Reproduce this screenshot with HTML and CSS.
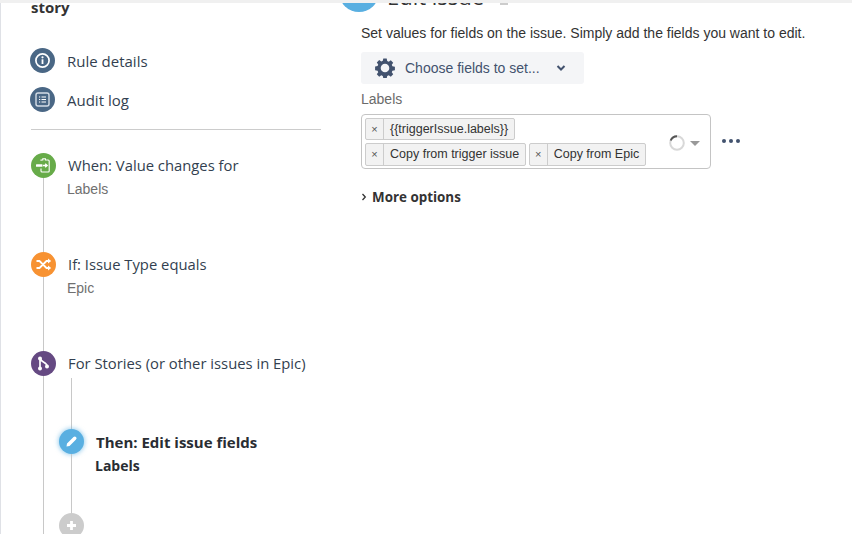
FILE: index.html
```html
<!DOCTYPE html>
<html lang="en">
<head>
<meta charset="utf-8">
<title>Edit issue rule</title>
<link rel="stylesheet" href="styles.css">
</head>
<body>
<div class="topstrip"></div>
<div class="page">
  <aside class="sidebar">
    <h1 class="rule-title">story</h1>
    <nav class="links">
      <a class="link">
        <span class="icon navy">
          <svg viewBox="0 0 25 25" width="25" height="25"><circle cx="12.5" cy="12.5" r="6.6" fill="none" stroke="#fff" stroke-width="1.7"/><rect x="11.6" y="11.3" width="1.8" height="4.7" fill="#fff"/><circle cx="12.5" cy="9.3" r="1.1" fill="#fff"/></svg>
        </span>
        <span>Rule details</span>
      </a>
      <a class="link">
        <span class="icon navy">
          <svg viewBox="0 0 25 25" width="25" height="25"><rect x="6" y="6" width="13" height="13" rx="2" fill="none" stroke="#d5dde6" stroke-width="1.4"/><path d="M9 10h1.2M11.5 10H16M9 12.5h1.2M11.5 12.5H16M9 15h1.2M11.5 15H16" stroke="#fff" stroke-width="1.2" fill="none"/></svg>
        </span>
        <span>Audit log</span>
      </a>
    </nav>
    <hr class="divider">
    <div class="timeline">
      <div class="step tall">
        <div class="rail">
          <span class="icon green">
            <svg viewBox="0 0 25 25" width="25" height="25"><path d="M10 7.800V7h1.800V5.800h2.600V7h2.800a1 1 0 0 1 1 1v10a1 1 0 0 1-1 1H11a1 1 0 0 1-1-1v-2.500" fill="none" stroke="#fff" stroke-width="1.100"/><rect x="5" y="11.300" width="6.500" height="2.400" rx=".5" fill="#fff"/><path d="M12 12.500h3.800M14.200 10.700l2 1.800-2 1.800" fill="none" stroke="#fff" stroke-width="1.300"/></svg>
          </span>
          <span class="line"></span>
        </div>
        <div class="step-body">
          <div class="step-title">When: Value changes for</div>
          <div class="step-sub">Labels</div>
        </div>
      </div>
      <div class="step tall">
        <div class="rail">
          <span class="icon orange">
            <svg viewBox="0 0 25 25" width="25" height="25"><path d="M5.500 9h3l7 7h2.500M5.500 16h3l7-7h2.500" fill="none" stroke="#fff" stroke-width="1.800"/><path d="M17 6.500l3.200 2.500-3.200 2.500zM17 13.500l3.200 2.500-3.200 2.500z" fill="#fff"/></svg>
          </span>
          <span class="line"></span>
        </div>
        <div class="step-body">
          <div class="step-title">If: Issue Type equals</div>
          <div class="step-sub">Epic</div>
        </div>
      </div>
      <div class="step">
        <div class="rail">
          <span class="icon purple">
            <svg viewBox="0 0 25 25" width="25" height="25"><path d="M9 7.500v10M9.500 8c1 3.500 6.500 3 6.500 7" fill="none" stroke="#fff" stroke-width="1.700"/><circle cx="9" cy="7.500" r="2" fill="#fff"/><circle cx="9" cy="17.500" r="2" fill="#fff"/><circle cx="16" cy="15.500" r="2" fill="#fff"/></svg>
          </span>
          <span class="line"></span>
        </div>
        <div class="step-body">
          <div class="step-title">For Stories (or other issues in Epic)</div>
          <div class="nested">
            <span class="stub"></span>
            <div class="step nested-step">
              <div class="rail">
                <span class="icon blue glow">
                  <svg viewBox="0 0 25 25" width="25" height="25"><path d="M8 14.500l6.500-6.500a1.500 1.500 0 0 1 2.500 2.500L10.500 17 7.500 17.500z" fill="#fff"/></svg>
                </span>
                <span class="line"></span>
              </div>
              <div class="step-body">
                <div class="step-title strong">Then: Edit issue fields</div>
                <div class="step-sub strong-sub">Labels</div>
              </div>
            </div>
            <div class="step">
              <div class="rail">
                <span class="icon grey">
                  <svg viewBox="0 0 25 25" width="25" height="25"><path d="M12.500 8v9M8 12.500h9" fill="none" stroke="#fff" stroke-width="2.800"/></svg>
                </span>
              </div>
            </div>
          </div>
        </div>
      </div>
    </div>
  </aside>
  <main class="main">
    <header class="main-head">
      <span class="head-icon"></span>
      <h2 class="head-title">Edit issue</h2>
      <span class="head-mark"></span>
    </header>
    <p class="desc">Set values for fields on the issue. Simply add the fields you want to edit.</p>
    <button class="choose">
      <svg class="gear" viewBox="0 0 20 20" width="20" height="20"><path d="M8.300 0.800h3.400l.5 2.500 1.500.6 2.100-1.400 2.400 2.400-1.400 2.100.6 1.500 2.500.5v3.400l-2.500.5-.6 1.500 1.400 2.100-2.400 2.400-2.100-1.400-1.500.6-.5 2.500H8.300l-.5-2.500-1.500-.6-2.100 1.400-2.400-2.400 1.400-2.100-.6-1.500-2.500-.5V8.700l2.500-.5.6-1.500-1.400-2.100 2.400-2.400 2.100 1.400 1.500-.6z" transform="translate(0 -.2)" fill="#42526e"/><circle cx="10" cy="10" r="4.300" fill="#f4f5f7"/></svg>
      <span class="choose-text">Choose fields to set...</span>
      <svg class="chev" viewBox="0 0 10 6" width="10" height="6"><path d="M1.500 1l3.500 3.500L8.500 1" fill="none" stroke="#42526e" stroke-width="2"/></svg>
    </button>
    <label class="field-label">Labels</label>
    <div class="field-row">
      <div class="select">
        <div class="tags">
          <span class="tag"><span class="tag-x">×</span><span class="tag-text">{{triggerIssue.labels}}</span></span>
          <span class="tag"><span class="tag-x">×</span><span class="tag-text">Copy from trigger issue</span></span>
          <span class="tag"><span class="tag-x">×</span><span class="tag-text">Copy from Epic</span></span>
        </div>
        <div class="select-tools">
          <svg class="spinner" viewBox="0 0 16 16" width="16" height="16"><circle cx="8" cy="8" r="6.800" fill="none" stroke="#d8d8d8" stroke-width="2"/><path d="M1.700 5.500A6.800 6.800 0 0 1 8 1.200" fill="none" stroke="#555" stroke-width="2"/></svg>
          <span class="caret"></span>
        </div>
      </div>
      <div class="dots"><span></span><span></span><span></span></div>
    </div>
    <div class="more">
      <svg viewBox="0 0 6 8" width="6" height="8"><path d="M1.500 1l2.800 3-2.800 3" fill="none" stroke="#333" stroke-width="1.300"/></svg>
      <span>More options</span>
    </div>
  </main>
</div>
</body>
</html>
```
FILE: styles.css
```css
* { box-sizing: border-box; }
html, body { margin: 0; padding: 0; height: 100%; overflow: hidden; background: #fff; }
body { display: flex; flex-direction: column; color: #333; font-family: "Open Sans", sans-serif; }

.topstrip { height: 3px; flex: none; background: #f0f0f0; }
.page { flex: 1; min-height: 0; display: flex; overflow: hidden; border-left: 1px solid #dfe1e6; }

/* Sidebar */
.sidebar { width: 320px; flex: none; padding-left: 29px; display: flex; flex-direction: column; }
.sidebar > * { flex: none; }
.rule-title { margin: 0 0 0 1px; height: 12px; font-size: 15px; font-weight: 700; line-height: 8px; color: #333; }

.links { margin-top: 33px; display: flex; flex-direction: column; gap: 14px; }
.link { display: flex; align-items: center; gap: 12px; height: 25px; font-size: 15px; color: #333f50; }

.icon { width: 25px; height: 25px; border-radius: 50%; flex: none; display: block; }
.icon svg { display: block; }
.navy { background: #4a6785; }
.green { background: #67ab49; }
.orange { background: #f79232; }
.purple { background: #654982; }
.blue { background: #59afe1; }
.grey { background: #ccc; }
.glow { box-shadow: 0 0 4px 1px rgba(89, 175, 225, .55); }

.divider { margin: 17px 0 0 1px; width: 290px; height: 1px; border: 0; background: #ccc; }

.timeline { margin-top: 23px; margin-left: 1px; display: flex; flex-direction: column; }
.step { display: flex; }
.tall { height: 99px; }
.rail { width: 25px; flex: none; display: flex; flex-direction: column; align-items: center; }
.rail .line { flex: 1; width: 1px; background: #c8c8c8; margin-right: 1px; }

.step-body { padding-left: 12px; }
.step-title { font-size: 14.800px; line-height: 25px; color: #333f50; white-space: nowrap; }
.step-sub { font-family: "Liberation Sans", sans-serif; font-size: 14px; line-height: 20px; margin-top: 1px; color: #707070; margin-left: -1px; }

.strong { font-weight: 700; font-size: 15px; color: #292d33; padding-top: 1px; }
.strong-sub { color: #292d33; font-family: "Open Sans", sans-serif; font-weight: 700; font-size: 14px; margin-top: 1px; }

.nested { margin-left: -9px; display: flex; flex-direction: column; height: 200px; }
.stub { display: block; flex: none; width: 1px; height: 51px; margin-left: 12px; margin-top: 2px; background: #c8c8c8; }
.nested-step { height: 84px; flex: none; }

/* Main */
.main { flex: 1; min-width: 0; padding-left: 40px; font-family: "Liberation Sans", sans-serif; }
.main-head { display: flex; margin: -31px 0 0 -22px; height: 40px; }
.head-icon { width: 40px; height: 40px; border-radius: 50%; background: #59afe1; flex: none; }
.head-title { margin: 0 0 0 8px; font-family: "Open Sans", sans-serif; font-size: 22px; font-weight: 400; line-height: 48px; height: 40px; color: #333; white-space: nowrap; }
.head-mark { width: 8px; height: 2px; margin: 31px 0 0 16px; background: #ccc; }

.desc { margin: 11px 0 0; font-size: 14px; line-height: 20px; color: #333; white-space: nowrap; }

.choose { margin: 9px 0 0; width: 223px; height: 32px; padding: 0 0 0 14px; display: flex; align-items: center; border: 0; border-radius: 3px; background: #f4f5f7; font-family: "Liberation Sans", sans-serif; font-size: 14px; color: #42526e; }
.gear { flex: none; }
.choose-text { margin-left: 10px; }
.chev { margin-left: 16px; flex: none; }

.field-label { display: block; margin-top: 7px; font-size: 14px; line-height: 17px; color: #6b6b6b; }

.field-row { margin-top: 6px; display: flex; align-items: center; }
.select { width: 350px; height: 55px; padding: 3px 0 0 3px; display: flex; border: 1px solid #c4c4c4; border-radius: 4px; }
.tags { width: 284px; display: flex; flex-wrap: wrap; align-content: flex-start; gap: 3px 3px; }
.tag { display: inline-flex; height: 23px; border: 1px solid #ccc; border-radius: 2px; background: #f2f2f2; font-size: 12.500px; line-height: 21px; color: #333; white-space: nowrap; }
.tag:first-child { height: 22px; margin-right: 60px; }
.tag-x { width: 18px; flex: none; text-align: center; border-right: 1px solid #ccc; font-size: 11px; color: #555; }
.tag-text { padding: 0 5.500px 0 6px; }

.select-tools { margin-left: 20px; height: 50px; display: flex; align-items: center; gap: 5px; }
.spinner { flex: none; }
.caret { width: 0; height: 0; border-left: 5px solid transparent; border-right: 5px solid transparent; border-top: 5px solid #999; }

.dots { margin: -1px 0 0 11px; display: flex; gap: 3px; }
.dots span { width: 4px; height: 4px; border-radius: 50%; background: #42526e; }

.more { margin-top: 19px; display: flex; align-items: center; gap: 5px; font-family: "Open Sans", sans-serif; font-size: 13.400px; font-weight: 700; color: #333; line-height: 18px; }
```
